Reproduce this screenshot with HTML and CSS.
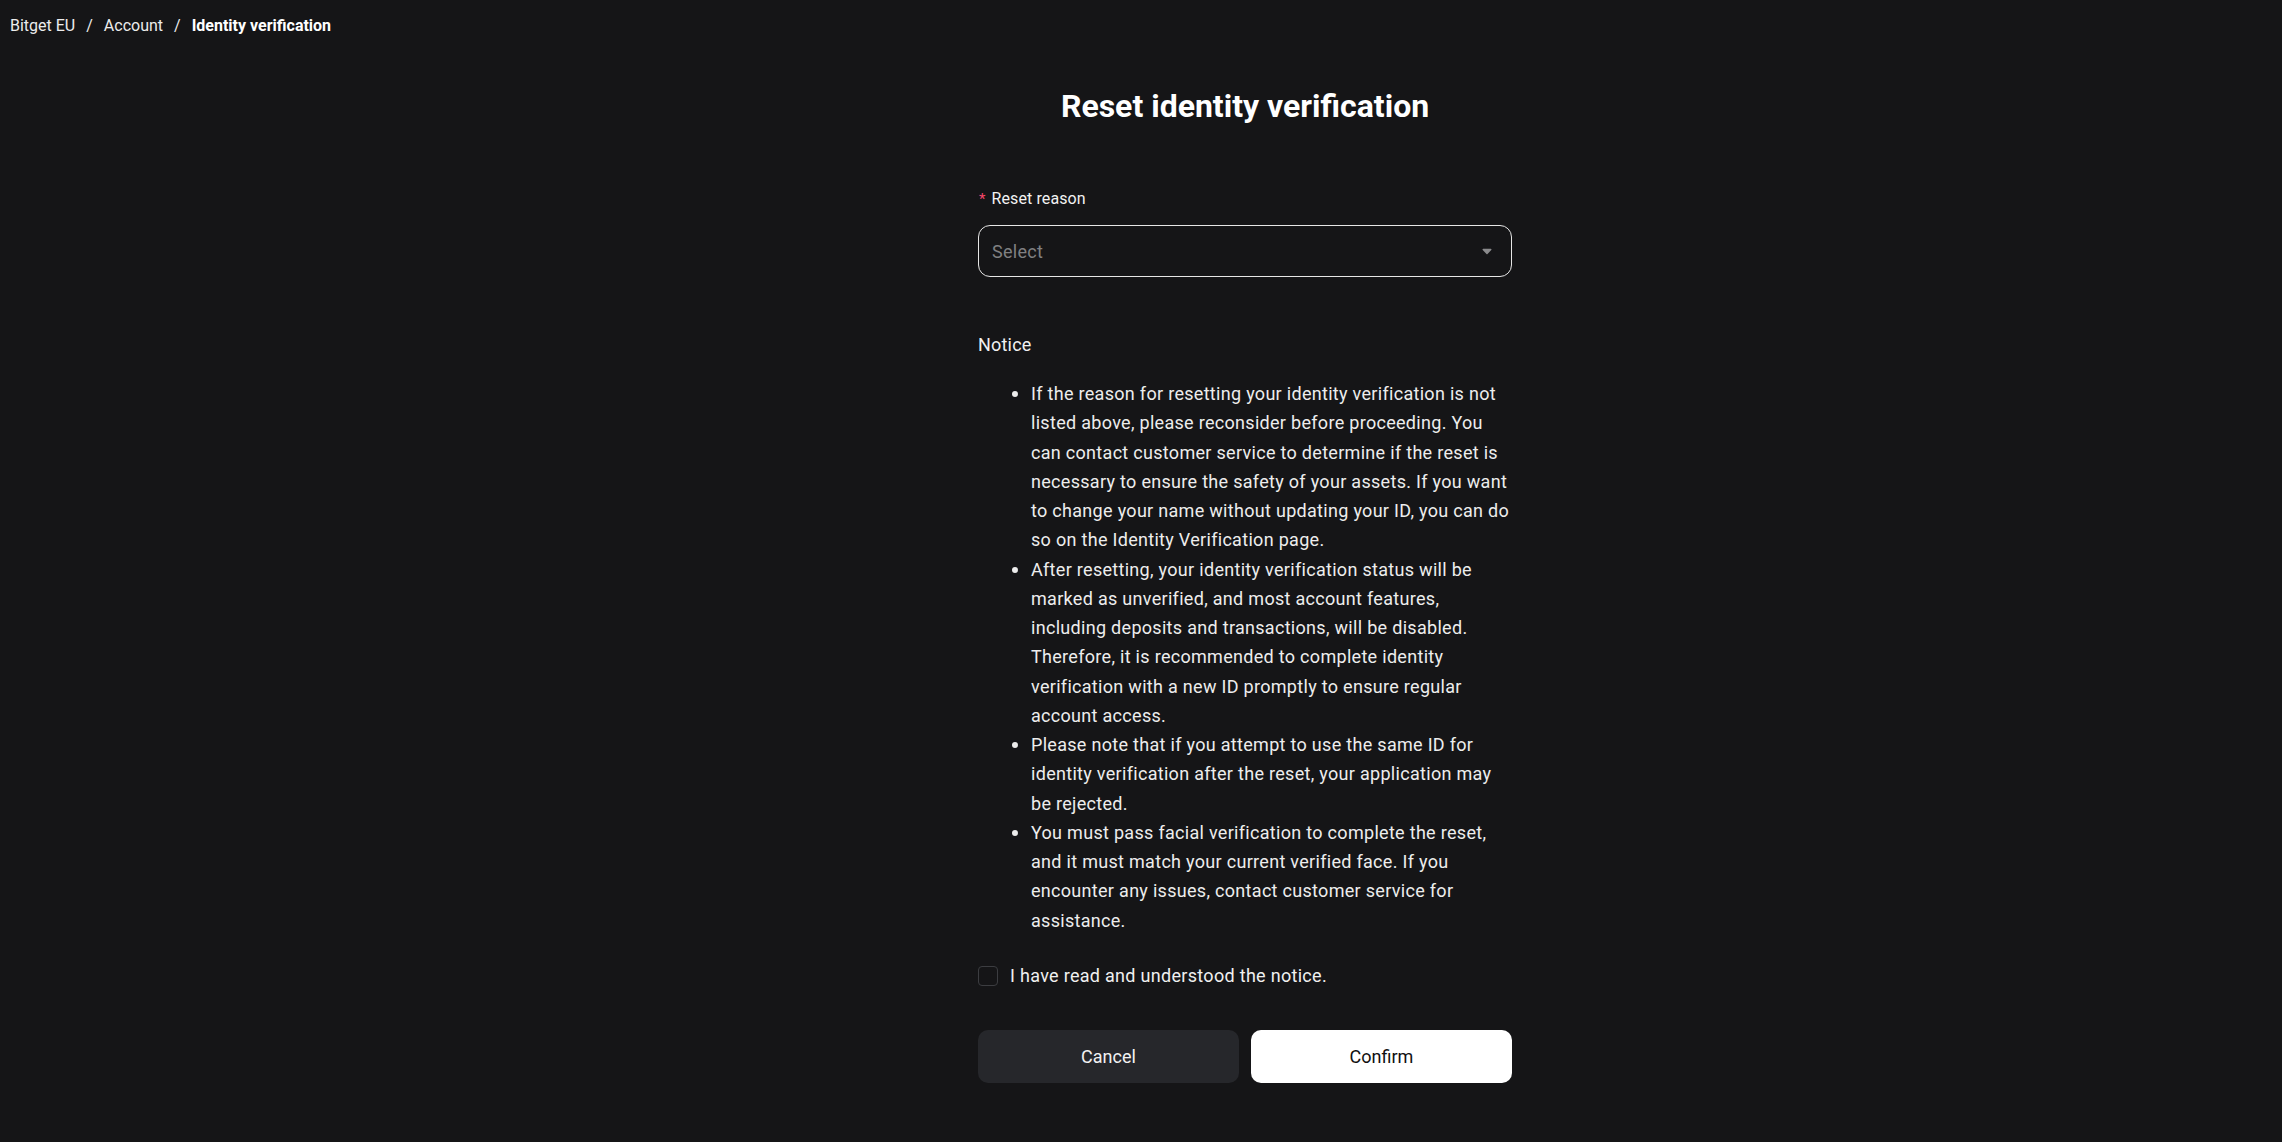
FILE: index.html
```html
<!DOCTYPE html>
<html lang="en">
<head>
<meta charset="utf-8">
<title>Reset identity verification</title>
<link rel="stylesheet" href="styles.css">
</head>
<body>
<nav class="crumbs">
  <span class="crumb">Bitget EU</span><span class="sep">/</span><span class="crumb">Account</span><span class="sep">/</span><span class="crumb current">Identity verification</span>
</nav>
<main class="main">
  <div class="form">
    <h1 class="title">Reset identity verification</h1>
    <div class="label"><span class="req">*</span>Reset reason</div>
    <div class="select">
      <span class="placeholder">Select</span>
      <svg class="arrow" width="10" height="7" viewBox="0 0 10 7"><path d="M1.2 0.8h7.6a0.7 0.7 0 0 1 0.5 1.2L5.5 5.9a0.7 0.7 0 0 1-1 0L0.7 2a0.7 0.7 0 0 1 0.5-1.2z" fill="#8a8a8c"/></svg>
    </div>
    <div class="notice-title">Notice</div>
    <ul class="notice">
      <li>If the reason for resetting your identity verification is not listed above, please reconsider before proceeding. You can contact customer service to determine if the reset is necessary to ensure the safety of your assets. If you want to change your name without updating your ID, you can do so on the Identity Verification page.</li>
      <li>After resetting, your identity verification status will be marked as unverified, and most account features, including deposits and transactions, will be disabled. Therefore, it is recommended to complete identity verification with a new ID promptly to ensure regular account access.</li>
      <li>Please note that if you attempt to use the same ID for identity verification after the reset, your application may be rejected.</li>
      <li>You must pass facial verification to complete the reset, and it must match your current verified face. If you encounter any issues, contact customer service for assistance.</li>
    </ul>
    <label class="agree"><span class="box"></span><span class="agree-text">I have read and understood the notice.</span></label>
    <div class="actions">
      <button class="btn btn-cancel">Cancel</button>
      <button class="btn btn-confirm">Confirm</button>
    </div>
  </div>
</main>
</body>
</html>
```
FILE: styles.css
```css
html, body {
  margin: 0;
  padding: 0;
  background: #151517;
}
body {
  font-family: Roboto, "Liberation Sans", Arial, sans-serif;
  color: #f2f2f2;
  min-height: 1142px;
}
.crumbs {
  padding: 14px 10px 0;
  font-size: 16px;
  line-height: 24px;
  color: #ececec;
  display: flex;
}
.sep {
  margin: 0 11px;
  color: #ececec;
}
.crumb.current {
  font-weight: 700;
  color: #ffffff;
}
.main {
  display: flex;
  justify-content: center;
  padding-left: 208px;
}
.form {
  width: 534px;
}
.title {
  margin: 48px 0 0;
  font-size: 32px;
  line-height: 40px;
  font-weight: 700;
  text-align: center;
  color: #ffffff;
}
.label {
  margin-top: 62px;
  font-size: 16px;
  line-height: 22px;
  color: #f2f2f2;
  display: flex;
  align-items: center;
  letter-spacing: 0.1px;
}
.req {
  color: #f5476a;
  margin-right: 6px;
  margin-left: 1px;
  font-size: 15px;
}
.select {
  margin-top: 15px;
  height: 52px;
  box-sizing: border-box;
  border: 1px solid #e6e6e6;
  border-radius: 12px;
  padding: 0 19px 0 13px;
  display: flex;
  align-items: center;
  justify-content: space-between;
}
.placeholder {
  font-size: 18px;
  color: #808082;
  letter-spacing: 0.3px;
}
.arrow {
  display: block;
}
.notice-title {
  margin-top: 55px;
  font-size: 18px;
  line-height: 26px;
  color: #f0f0f0;
  letter-spacing: 0.2px;
}
.notice {
  margin: 21px 0 0;
  padding: 0 0 0 53px;
  font-size: 18px;
  line-height: 29.25px;
  color: #ededed;
  letter-spacing: 0.3px;
}
.notice li {
  list-style: none;
  position: relative;
}
.notice li::before {
  content: "";
  position: absolute;
  left: -19px;
  top: 12px;
  width: 6px;
  height: 6px;
  border-radius: 50%;
  background: #ededed;
}
.agree {
  margin-top: 28px;
  display: flex;
  align-items: center;
  gap: 12px;
  font-size: 18px;
  line-height: 26px;
  color: #f0f0f0;
  letter-spacing: 0.3px;
}
.box {
  width: 20px;
  height: 20px;
  box-sizing: border-box;
  border: 1px solid #3c3d41;
  border-radius: 4px;
  flex: none;
}
.actions {
  margin-top: 41px;
  display: flex;
  gap: 12px;
}
.btn {
  flex: 1;
  height: 53px;
  border: none;
  border-radius: 10px;
  font-family: Roboto, "Liberation Sans", Arial, sans-serif;
  font-size: 18px;
  cursor: pointer;
}
.btn-cancel {
  background: #26272b;
  color: #f2f2f2;
}
.btn-confirm {
  background: #ffffff;
  color: #111111;
}
```
